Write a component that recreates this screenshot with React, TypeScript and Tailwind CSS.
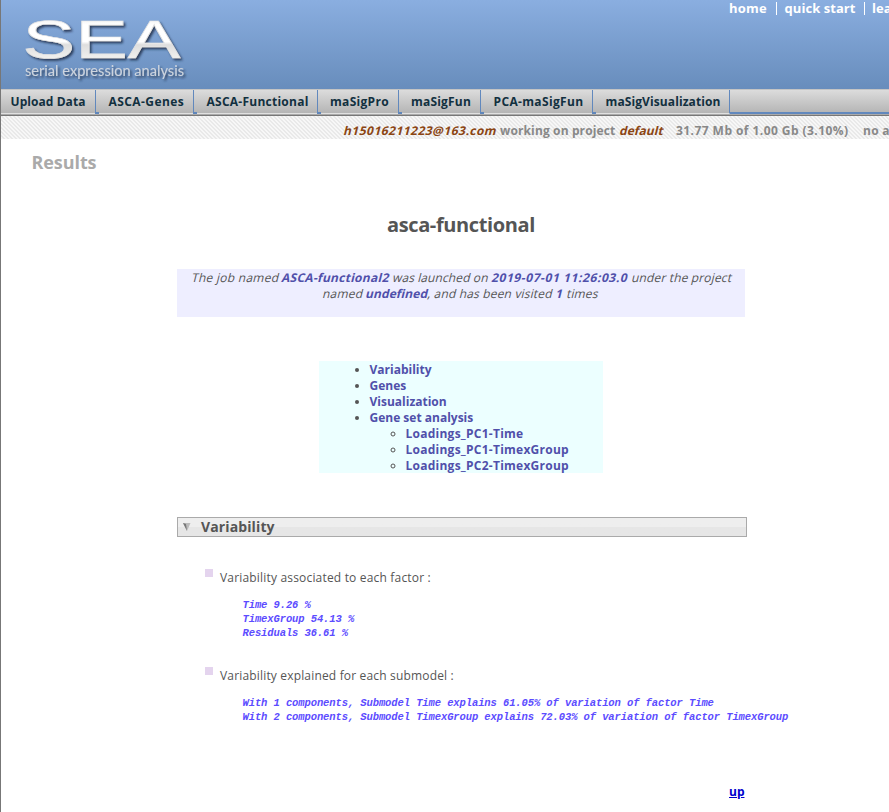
const sans = "font-['Open_Sans','Noto_Sans',sans-serif]";

const tabs = [
  { label: "Upload Data", cls: "w-[95px] pl-[9.5px] tracking-[0.06px]" },
  { label: "ASCA-Genes", cls: "w-[98px] pl-[12.5px] tracking-[0.42px]" },
  { label: "ASCA-Functional", cls: "w-[124px] pl-[12.5px] tracking-[0.25px]" },
  { label: "maSigPro", cls: "w-[81px] pl-[12px] tracking-[0.3px]" },
  { label: "maSigFun", cls: "w-[82px] pl-[12px] tracking-[0.19px]" },
  { label: "PCA-maSigFun", cls: "w-[112px] pl-[12.5px] tracking-[0.35px]" },
  { label: "maSigVisualization", cls: "w-[137px] pl-[12.5px] tracking-[0.1px]" },
];

function Logo() {
  return (
    <svg className="ml-[20px] mt-[12px] block h-[74px] w-[180px]" viewBox="21 12 180 74">
      <defs>
        <linearGradient id="silver" gradientUnits="userSpaceOnUse" x1="0" y1="19" x2="0" y2="58">
          <stop offset="0" stopColor="#f2f2f2" />
          <stop offset="0.15" stopColor="#ffffff" />
          <stop offset="0.58" stopColor="#ffffff" />
          <stop offset="0.66" stopColor="#dedede" />
          <stop offset="1" stopColor="#f0f0ee" />
        </linearGradient>
        <filter id="shadow" x="-10%" y="-20%" width="120%" height="150%">
          <feDropShadow dx="1.8" dy="2" stdDeviation="1.1" floodColor="#1d2f4c" floodOpacity="0.85" />
        </filter>
      </defs>
      <text x="22.5" y="57.5" fontSize="54.5" textLength="158" lengthAdjust="spacingAndGlyphs" fill="url(#silver)" stroke="#e4e4e4" strokeWidth="0.6" filter="url(#shadow)" className="font-['Liberation_Sans',sans-serif]">
        SEA
      </text>
      <text x="25" y="75.5" fontSize="14.5" textLength="159" lengthAdjust="spacingAndGlyphs" fill="#cdd4de" filter="url(#shadow)" className="font-['Lato',sans-serif]">
        serial expression analysis
      </text>
    </svg>
  );
}

function Bullet() {
  return <span className="mr-[7px] mt-[-1px] h-2 w-2 shrink-0 bg-[#e4d4ee]" />;
}

const code = "whitespace-pre font-['Liberation_Mono',monospace] text-[10.5px] font-bold italic leading-[14px] tracking-[-0.1px] text-[#5c4cff]";

export default function App() {
  return (
    <div className={`${sans} h-[812px] w-[889px] overflow-hidden border-l border-[#777] bg-white text-[12px] leading-4 text-[#555]`}>
      <header className="flex h-[89px] justify-between bg-linear-to-b from-[#8aaee0] to-[#688dbc]">
        <Logo />
        <nav className="flex h-[16px] shrink-0 items-center text-[13px] font-bold text-white">
          <a className="w-[47px] tracking-[0.24px]">home</a>
          <span className="h-[13px] w-[8.5px] border-l border-white" />
          <a className="w-[79.5px] tracking-[0.06px]">quick start</a>
          <span className="h-[13px] w-[8px] border-l border-white" />
          <a className="w-[17px] overflow-hidden tracking-[0.1px]">learn</a>
        </nav>
      </header>

      <nav className="flex h-[25px] border-t border-[#c4c4c4] bg-linear-to-b from-[#dcdcdc] to-[#b3b3b3] font-bold text-[#12303f]">
        {tabs.map((t) => (
          <a key={t.label} className={`relative h-full whitespace-nowrap border-b border-r border-b-[#e0e0e0] border-r-[#6188bd] leading-[24px] after:absolute after:bottom-[-1px] after:right-[-4px] after:z-10 after:h-[2px] after:w-[4px] after:bg-[#5f86bb] last-of-type:after:hidden ${t.cls}`}>
            {t.label}
          </a>
        ))}
        <span className="h-[24px] flex-1 border-b-2 border-[#6188bd]" />
      </nav>
      <div className="h-[2px] border-t border-t-[#aaa] bg-[#777]" />

      <div className="flex h-[23px] items-center bg-[repeating-linear-gradient(45deg,#f7f7f7_0px,#f7f7f7_1.42px,#e9e9e9_1.42px,#e9e9e9_2.83px)] pl-[343px] pt-[7px] font-bold whitespace-nowrap text-[#888]">
        <span className="w-[156px] shrink-0 tracking-[0.48px] text-[#8b4513]">
          <span className="inline-block skew-x-[-14deg]">h15016211223@163.com</span>
        </span>
        <span className="w-[119.5px] shrink-0 tracking-[0.13px]">working on project</span>
        <span className="w-[56.5px] shrink-0 tracking-[0.05px] text-[#8b4513]">
          <span className="inline-block skew-x-[-14deg]">default</span>
        </span>
        <span className="w-[187px] shrink-0 tracking-[0.44px]">31.77 Mb of 1.00 Gb (3.10%)</span>
        <span className="w-[26px] shrink-0 overflow-hidden tracking-[0.3px]">no active jobs</span>
      </div>

      <main>
        <h1 className="ml-[30.5px] mt-[11px] text-[18px] font-bold leading-6 tracking-[-0.08px] text-[#aaa]">Results</h1>
        <h2 className="ml-[386px] mt-[38px] text-[20px] font-bold leading-[26px] tracking-[-0.38px]">asca-functional</h2>

        <section className="ml-[176px] mt-[31px] h-[48px] w-[568px] bg-[#eeeeff] pt-px whitespace-nowrap">
          <p className="ml-[15px] flex skew-x-[-14deg]">
            <span className="w-[90px] tracking-[0.28px]">The job named</span>
            <b className="w-[111px] tracking-[0.27px] text-[#5050aa]">ASCA-functional2</b>
            <span className="w-[99px] tracking-[0.1px]">was launched on</span>
            <b className="w-[140px] tracking-[0.58px] text-[#5050aa]">2019-07-01 11:26:03.0</b>
            <span className="tracking-[0.15px]">under the project</span>
          </p>
          <p className="ml-[145.5px] flex skew-x-[-14deg]">
            <span className="w-[43px] tracking-[0.2px]">named</span>
            <b className="w-[62px] tracking-[0.1px] text-[#5050aa]">undefined</b>
            <span className="w-[128px] tracking-[0.17px]">, and has been visited</span>
            <b className="w-[11px] text-[#5050aa]">1</b>
            <span className="tracking-[0.15px]">times</span>
          </p>
        </section>

        <section className="ml-[318px] mt-[44px] h-[112px] w-[284px] bg-[#ecffff]">
          <ul className="relative top-px list-disc pl-[50.5px] font-bold text-[#555]">
            <li><a className="text-[#5050aa]">Variability</a></li>
            <li><a className="text-[#5050aa]">Genes</a></li>
            <li><a className="text-[#5050aa]">Visualization</a></li>
            <li>
              <a className="text-[#5050aa]">Gene set analysis</a>
              <ul className="list-[circle] pl-[36px]">
                <li><a className="tracking-[0.25px] text-[#5050aa]">Loadings_PC1-Time</a></li>
                <li><a className="tracking-[0.25px] text-[#5050aa]">Loadings_PC1-TimexGroup</a></li>
                <li><a className="tracking-[0.25px] text-[#5050aa]">Loadings_PC2-TimexGroup</a></li>
              </ul>
            </li>
          </ul>
        </section>

        <div className="ml-[176px] mt-[44px] flex h-5 w-[570px] items-center border border-[#aaa] bg-linear-to-b from-[#eeeeee] from-50% to-[#e6e6e6] to-50%">
          <svg className="ml-[5px] h-2 w-2" viewBox="0 0 8 8">
            <path d="M0 0H7.5L4 8Z" fill="#bbb" />
            <path d="M0 0L4 8L3 1Z" fill="#777" />
          </svg>
          <h3 className="ml-[10px] text-[14px] font-bold leading-[18px] tracking-[0.12px]">Variability</h3>
        </div>

        <div className="ml-[204px] mt-[33px] flex">
          <Bullet />
          <p className="tracking-[0.18px]">Variability associated to each factor :</p>
        </div>
        <pre className={`${code} ml-[241.5px] mt-[12px]`}>
          {"Time 9.26 %\nTimexGroup 54.13 %\nResiduals 36.61 %"}
        </pre>

        <div className="ml-[204px] mt-[28px] flex">
          <Bullet />
          <p className="tracking-[0.17px]">Variability explained for each submodel :</p>
        </div>
        <pre className={`${code} ml-[241.5px] mt-[12px]`}>
          {"With 1 components, Submodel Time explains 61.05% of variation of factor Time\nWith 2 components, Submodel TimexGroup explains 72.03% of variation of factor TimexGroup"}
        </pre>
        <a className="ml-[728px] mt-[60px] block font-bold text-[#0000cc] underline">up</a>
      </main>
    </div>
  );
}
